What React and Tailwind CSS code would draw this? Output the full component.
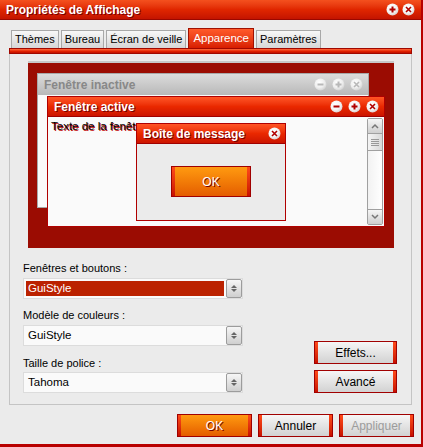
import React from 'react';

const font = { fontFamily: '"Liberation Sans", Arial, sans-serif' };

function Circle({ glyph, dim }) {
  const stroke = dim ? '#b8b8b8' : '#b00000';
  return (
    <svg width="13" height="13" viewBox="0 0 13 13">
      <defs>
        <radialGradient id={dim ? 'cg-dim' : 'cg'} cx="0.4" cy="0.35" r="0.7">
          <stop offset="0" stopColor="#ffffff" />
          <stop offset="0.6" stopColor={dim ? '#eeeeee' : '#f4f4f4'} />
          <stop offset="1" stopColor={dim ? '#cfcfcf' : '#d9c8c8'} />
        </radialGradient>
      </defs>
      <circle cx="6.5" cy="6.5" r="6" fill={`url(#${dim ? 'cg-dim' : 'cg'})`} />
      {glyph === 'min' && <path d="M3.5 6.5h6" stroke={stroke} strokeWidth="2" />}
      {glyph === 'max' && <path d="M3.5 6.5h6M6.5 3.5v6" stroke={stroke} strokeWidth="2" />}
      {glyph === 'close' && <path d="M4 4l5 5M9 4l-5 5" stroke={stroke} strokeWidth="1.6" />}
    </svg>
  );
}

function Combo({ value, selected }) {
  return (
    <div className="flex w-[220px] h-[21px] border border-[#dcdcdc] bg-[#fafafa]">
      <div className="flex-1 p-[2px]">
        <div className={`h-full flex items-center pl-[2px] text-[11.5px] ${selected ? 'bg-[#bb2200] text-white' : 'text-black'}`}>
          {value}
        </div>
      </div>
      <div className="w-[16px] h-[19px] border border-[#9c9c9c] rounded-[2px] bg-gradient-to-b from-[#f6f6f6] to-[#cfcfcf] flex flex-col items-center justify-center gap-[1px]">
        <div className="w-0 h-0 border-l-[3px] border-r-[3px] border-b-[3px] border-l-transparent border-r-transparent border-b-[#666]" />
        <div className="w-0 h-0 border-l-[3px] border-r-[3px] border-t-[3px] border-l-transparent border-r-transparent border-t-[#666]" />
      </div>
    </div>
  );
}

function RedButton({ children, orange, disabled, className }) {
  return (
    <div className={`flex h-[23px] border border-[#a00000] ${className}`}>
      <div className="w-[3px] bg-gradient-to-b from-[#ff4a1a] to-[#c80e00]" />
      <div
        className={`flex-1 flex items-center justify-center text-[12px] ${
          orange
            ? 'bg-gradient-to-b from-[#ff9a10] to-[#e45c00] text-white [text-shadow:1px_1px_0_#700]'
            : 'bg-gradient-to-b from-[#f6f6f6] to-[#d2d2d2] ' + (disabled ? 'text-[#9c9c9c]' : 'text-black')
        }`}
      >
        {children}
      </div>
      <div className="w-[3px] bg-gradient-to-b from-[#ff4a1a] to-[#c80e00]" />
    </div>
  );
}

function Tab({ label, active }) {
  if (active) {
    return (
      <div className="h-[20px] px-[4px] flex items-center border border-[#a01000] border-b-0 bg-gradient-to-b from-[#ff5a2a] to-[#d81c00] text-white text-[11.5px]">
        {label}
      </div>
    );
  }
  return (
    <div className="h-[18px] px-[3px] flex items-center border border-[#a8a8a8] border-b-0 bg-gradient-to-b from-[#f8f8f8] to-[#d6d6d6] text-black text-[11px]">
      {label}
    </div>
  );
}

export default function App() {
  return (
    <div style={font} className="w-[423px] h-[447px] bg-[#ebebeb] flex flex-col border-r-2 border-b-[3px] border-[#b80000]">
      {/* title bar */}
      <div className="h-[20px] flex items-center justify-between pl-[6px] pr-[6px] bg-gradient-to-b from-[#f4501e] via-[#e02600] to-[#c41400] border-b border-[#9a0800]">
        <span className="text-white font-bold text-[12px] [text-shadow:1px_1px_0_#7a0000]">Propriétés de Affichage</span>
        <div className="flex gap-[3px]">
          <Circle glyph="max" />
          <Circle glyph="close" />
        </div>
      </div>

      <div className="flex-1 flex flex-col px-[9px]">
        {/* tabs */}
        <div className="flex items-end gap-[2px] pl-[2px] mt-[8px] h-[20px]">
          <Tab label="Thèmes" />
          <Tab label="Bureau" />
          <Tab label="Écran de veille" />
          <Tab label="Apparence" active />
          <Tab label="Paramètres" />
        </div>
        <div className="h-[6px] bg-gradient-to-b from-[#ff6a3a] via-[#e82400] to-[#c01000] border border-[#a00800]" />

        {/* panel */}
        <div className="h-[351px] border border-t-0 border-[#c4c4c4] bg-[#ebebeb] flex flex-col pl-[13px] pr-[13px]">
          {/* preview */}
          <div className="relative mt-[7px] ml-[5px] w-[366px] h-[187px] border-t-2 border-[#c8c8c8] bg-[#9b0c02]">
            {/* inactive window */}
            <div className="absolute left-[9px] top-[10px] w-[332px] h-[135px] border border-[#a8a8a8] bg-[#fafafa] flex flex-col">
              <div className="h-[21px] flex items-center justify-between pl-[6px] pr-[5px] bg-gradient-to-b from-[#dcdcdc] to-[#b8b8b8]">
                <span className="text-[#888] font-bold text-[12px]">Fenêtre inactive</span>
                <div className="flex gap-[5px]">
                  <Circle glyph="min" dim />
                  <Circle glyph="max" dim />
                  <Circle glyph="close" dim />
                </div>
              </div>
            </div>
            {/* active window */}
            <div className="absolute left-[19px] top-[33px] w-[338px] h-[131px] border border-[#b00000] bg-[#fafafa] flex flex-col">
              <div className="h-[20px] flex items-center justify-between pl-[6px] pr-[5px] bg-gradient-to-b from-[#ff5424] via-[#ea2800] to-[#cc1400] border-b border-[#a00000]">
                <span className="text-white font-bold text-[12px] [text-shadow:1px_1px_0_#700]">Fenêtre active</span>
                <div className="flex gap-[5px]">
                  <Circle glyph="min" />
                  <Circle glyph="max" />
                  <Circle glyph="close" />
                </div>
              </div>
              <div className="flex-1 flex">
                <div className="flex-1 pl-[3px] pt-[1px] text-[11.5px] text-black [text-shadow:1px_1px_0_#c00000]">Texte de la fenêtre</div>
                <div className="w-[16px] my-[1px] mr-[1px] flex flex-col border border-[#a0a0a0] rounded-[2px] bg-gradient-to-r from-[#f2f2f2] to-[#ffffff]">
                  <div className="h-[15px] border-b border-[#a0a0a0] bg-gradient-to-b from-[#f6f6f6] to-[#cfcfcf] flex items-center justify-center">
                    <svg width="8" height="6" viewBox="0 0 8 6"><path d="M1 5l3-3 3 3" stroke="#777" strokeWidth="1.5" fill="none" /></svg>
                  </div>
                  <div className="h-[17px] border-b border-[#a0a0a0] bg-gradient-to-r from-[#f4f4f4] to-[#d8d8d8] flex flex-col items-center justify-center gap-[1px]">
                    <div className="w-[8px] h-px bg-[#999]" />
                    <div className="w-[8px] h-px bg-[#999]" />
                    <div className="w-[8px] h-px bg-[#999]" />
                    <div className="w-[8px] h-px bg-[#999]" />
                  </div>
                  <div className="flex-1" />
                  <div className="h-[15px] border-t border-[#a0a0a0] bg-gradient-to-b from-[#f6f6f6] to-[#cfcfcf] flex items-center justify-center">
                    <svg width="8" height="6" viewBox="0 0 8 6"><path d="M1 1l3 3 3-3" stroke="#777" strokeWidth="1.5" fill="none" /></svg>
                  </div>
                </div>
              </div>
            </div>
            {/* message box */}
            <div className="absolute left-[108px] top-[60px] w-[150px] h-[98px] border border-[#b00000] bg-[#ebebeb] flex flex-col">
              <div className="h-[20px] flex items-center justify-between pl-[6px] pr-[4px] bg-gradient-to-b from-[#ff5424] via-[#ea2800] to-[#cc1400] border-b border-[#a00000]">
                <span className="text-white font-bold text-[12px] [text-shadow:1px_1px_0_#700]">Boîte de message</span>
                <Circle glyph="close" />
              </div>
              <div className="flex-1 flex justify-center pt-[22px]">
                <RedButton orange className="w-[80px] h-[31px]">OK</RedButton>
              </div>
            </div>
          </div>

          {/* form */}
          <div className="flex justify-between mt-[13px]">
            <div className="flex flex-col">
              <div className="text-[11px] h-[14px] leading-[14px] text-black">Fenêtres et boutons :</div>
              <div className="mt-[3px]"><Combo value="GuiStyle" selected /></div>
              <div className="text-[11px] h-[14px] leading-[14px] text-black mt-[9px]">Modèle de couleurs :</div>
              <div className="mt-[3px]"><Combo value="GuiStyle" /></div>
              <div className="text-[11px] h-[14px] leading-[14px] text-black mt-[10px]">Taille de police :</div>
              <div className="mt-[2px]"><Combo value="Tahoma" /></div>
            </div>
            <div className="flex flex-col justify-end gap-[6px] mr-[1px]">
              <RedButton className="w-[83px]">Effets...</RedButton>
              <RedButton className="w-[83px]">Avancé</RedButton>
            </div>
          </div>
        </div>

        {/* dialog buttons */}
        <div className="flex justify-end gap-[6px] mt-[9px] mr-[-2px]">
          <RedButton orange className="w-[75px]">OK</RedButton>
          <RedButton className="w-[75px]">Annuler</RedButton>
          <RedButton disabled className="w-[75px]">Appliquer</RedButton>
        </div>
      </div>
    </div>
  );
}
